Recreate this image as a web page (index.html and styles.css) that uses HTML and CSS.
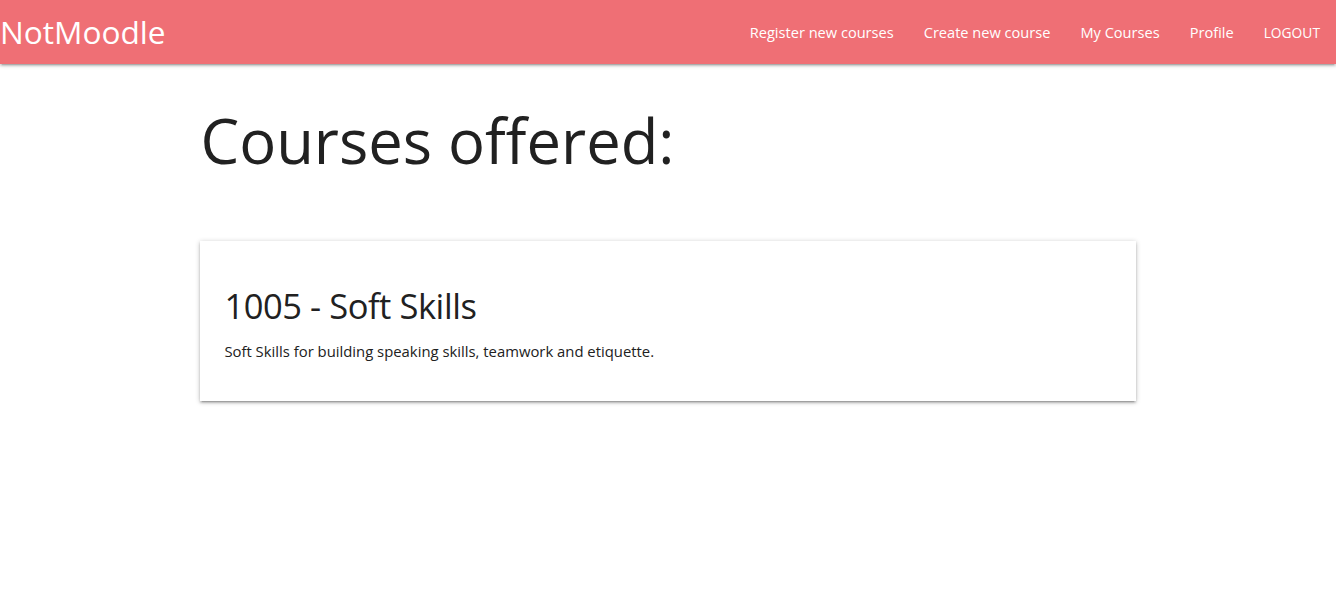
FILE: index.html
```html
<!DOCTYPE html>
<html lang="en">
<head>
<meta charset="utf-8">
<title>NotMoodle</title>
<link rel="stylesheet" href="styles.css">
</head>
<body>
<nav class="nav">
  <a class="brand" href="#">NotMoodle</a>
  <ul class="nav-links">
    <li><a href="#">Register new courses</a></li>
    <li><a href="#">Create new course</a></li>
    <li><a href="#">My Courses</a></li>
    <li><a href="#">Profile</a></li>
    <li><a href="#" class="logout">LOGOUT</a></li>
  </ul>
</nav>
<main class="container">
  <h1 class="page-title">Courses offered:</h1>
  <div class="card">
    <h4 class="card-title">1005 - Soft Skills</h4>
    <p class="card-text">Soft Skills for building speaking skills, teamwork and etiquette.</p>
  </div>
</main>
</body>
</html>
```
FILE: styles.css
```css
* { box-sizing: border-box; }
html, body { margin: 0; padding: 0; }
body {
  font-family: "Open Sans", "Noto Sans", sans-serif;
  color: rgba(0,0,0,0.87);
  background: #fff;
}
.nav {
  height: 64px;
  background: #ef6f75;
  display: flex;
  align-items: center;
  justify-content: space-between;
  position: relative;
  z-index: 2;
  box-shadow: 0 2px 2px 0 rgba(0,0,0,0.14), 0 3px 1px -2px rgba(0,0,0,0.12), 0 1px 5px 0 rgba(0,0,0,0.2);
}
.brand {
  color: #fff;
  text-decoration: none;
  font-size: 31.6px;
  line-height: 64px;
}
.nav-links {
  list-style: none;
  margin: 0;
  padding: 0;
  display: flex;
  align-items: center;
}
.nav-links a {
  display: block;
  color: #fff;
  text-decoration: none;
  font-size: 14.6px;
  padding: 0 15px;
  line-height: 64px;
}
.nav-links .logout { font-size: 13.8px; padding-right: 16px; padding-top: 2px; }
.container {
  width: 70%;
  margin: 0 auto;
  padding-bottom: 40px;
}
.page-title {
  font-size: 61.5px;
  font-weight: 400;
  line-height: 1.1;
  margin: 43px 0 0;
  height: 134px;
  color: #212121;
}
.card {
  background: #fff;
  padding: 46px 24px 0;
  height: 160px;
  box-shadow: 0 2px 2px 0 rgba(0,0,0,0.16), 0 3px 1px -2px rgba(0,0,0,0.14), 0 1px 5px 0 rgba(0,0,0,0.24);
}
.card-title {
  font-size: 34.5px;
  font-weight: 400;
  line-height: 1.1;
  letter-spacing: -0.45px;
  margin: 0 0 15px;
  color: #212121;
}
.card-text {
  font-size: 14.85px;
  line-height: 1.5;
  margin: 0;
  color: #212121;
}
```
